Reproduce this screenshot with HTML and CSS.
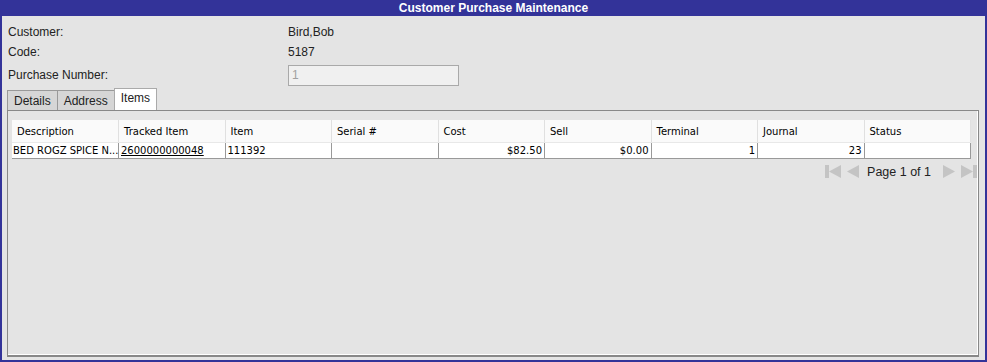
FILE: index.html
```html
<!DOCTYPE html>
<html lang="en">
<head>
    <meta charset="UTF-8">
    <title>Customer Purchase Maintenance</title>
    <link rel="stylesheet" href="styles.css">
</head>
<body>
    <div class="window">
        <div class="titlebar">Customer Purchase Maintenance</div>
        <div class="content">
            <div class="fields">
                <div class="field">
                    <span class="label">Customer:</span>
                    <span class="value">Bird,Bob</span>
                </div>
                <div class="field">
                    <span class="label">Code:</span>
                    <span class="value">5187</span>
                </div>
                <div class="field field-input">
                    <span class="label">Purchase Number:</span>
                    <input type="text" class="value-input" value="1" disabled>
                </div>
            </div>

            <div class="tabs">
                <div class="tab">Details</div>
                <div class="tab">Address</div>
                <div class="tab active">Items</div>
            </div>

            <div class="panel">
                <table class="grid">
                    <thead>
                        <tr>
                            <th>Description</th>
                            <th>Tracked Item</th>
                            <th>Item</th>
                            <th>Serial #</th>
                            <th>Cost</th>
                            <th>Sell</th>
                            <th>Terminal</th>
                            <th>Journal</th>
                            <th>Status</th>
                        </tr>
                    </thead>
                    <tbody>
                        <tr>
                            <td class="desc">BED ROGZ SPICE N...</td>
                            <td><a href="#">2600000000048</a></td>
                            <td>111392</td>
                            <td></td>
                            <td class="num">$82.50</td>
                            <td class="num">$0.00</td>
                            <td class="num">1</td>
                            <td class="num">23</td>
                            <td></td>
                        </tr>
                    </tbody>
                </table>

                <div class="pager">
                    <svg width="16" height="15" viewBox="0 0 16 15"><rect x="0" y="1" width="4" height="13" fill="#c4c4c4"/><path d="M16 1 L4 7.5 L16 14 Z" fill="#c4c4c4"/></svg>
                    <svg width="14" height="15" viewBox="0 0 14 15"><path d="M13 1 L1 7.5 L13 14 Z" fill="#c4c4c4"/></svg>
                    <span class="page-text">Page 1 of 1</span>
                    <svg width="14" height="15" viewBox="0 0 14 15"><path d="M1 1 L13 7.5 L1 14 Z" fill="#c4c4c4"/></svg>
                    <svg width="16" height="15" viewBox="0 0 16 15"><path d="M0 1 L12 7.5 L0 14 Z" fill="#c4c4c4"/><rect x="12" y="1" width="4" height="13" fill="#c4c4c4"/></svg>
                </div>
            </div>
        </div>
    </div>
</body>
</html>
```

FILE: styles.css
```css
body {
    margin: 0;
    font-family: "Liberation Sans", Arial, sans-serif;
    background-color: #e4e4e4;
}
.window {
    width: 987px;
    height: 362px;
    box-sizing: border-box;
    background-color: #333399;
    padding: 0 2px 2px 2px;
    display: flex;
    flex-direction: column;
}
.titlebar {
    height: 16px;
    line-height: 16px;
    color: #fff;
    font-weight: bold;
    font-size: 12px;
    text-align: center;
}
.content {
    flex: 1;
    background-color: #e4e4e4;
    padding: 6px 6px 3px 5px;
    display: flex;
    flex-direction: column;
}
.fields {
    display: flex;
    flex-direction: column;
}
.field {
    display: flex;
    align-items: center;
    height: 20px;
    font-size: 12px;
    color: #222;
}
.field-input {
    height: 24px;
    margin-top: 1px;
}
.label {
    width: 280px;
    padding-left: 1px;
}
.value {
    color: #222;
}
.value-input {
    width: 171px;
    height: 21px;
    box-sizing: border-box;
    border: 1px solid #a9a9a9;
    background-color: #f0f0f0;
    font-family: "Liberation Sans", Arial, sans-serif;
    font-size: 12px;
    color: #a0a0a0;
    padding: 0 3px;
}
.tabs {
    display: flex;
    align-items: flex-end;
    margin-top: 1px;
    height: 22px;
}
.tab {
    height: 19px;
    line-height: 21px;
    padding: 0 6px;
    font-size: 12px;
    color: #222;
    background-color: #d6d6d6;
    border: 1px solid #999;
    border-bottom: none;
    margin-right: -1px;
}
.tab.active {
    height: 21px;
    line-height: 19px;
    background-color: #fff;
    border-color: #aaa;
    position: relative;
    z-index: 1;
}
.panel {
    flex: 1;
    width: 972px;
    border: 1px solid #888;
    border-bottom: 2px solid #888;
    box-shadow: inset -1px -1px 0 #fff;
    background-color: #e4e4e4;
    padding: 9px 0 0 4px;
    box-sizing: border-box;
}
.grid {
    width: 959px;
    border-collapse: collapse;
    table-layout: fixed;
    font-family: "DejaVu Sans", Tahoma, sans-serif;
    font-size: 10px;
    color: #000;
}
.grid th {
    height: 22px;
    background-color: #fafafa;
    border-right: 1px solid #e0e0e0;
    border-bottom: 1px solid #e8e8e8;
    font-weight: normal;
    text-align: left;
    padding: 0 5px;
}
.grid td {
    height: 15px;
    background-color: #fff;
    border: 1px solid #999;
    border-top: none;
    padding: 0 2px;
    white-space: nowrap;
    overflow: hidden;
}
.grid td:first-child {
    border-left: none;
    padding-left: 1px;
}
.grid td a {
    color: #000;
}
.grid td.num {
    text-align: right;
}
.pager {
    display: flex;
    align-items: center;
    justify-content: flex-end;
    gap: 5px;
    margin-top: 5px;
    width: 965px;
}
.page-text {
    font-size: 12.5px;
    color: #222;
    margin: 0 6px 0 2px;
}
```
